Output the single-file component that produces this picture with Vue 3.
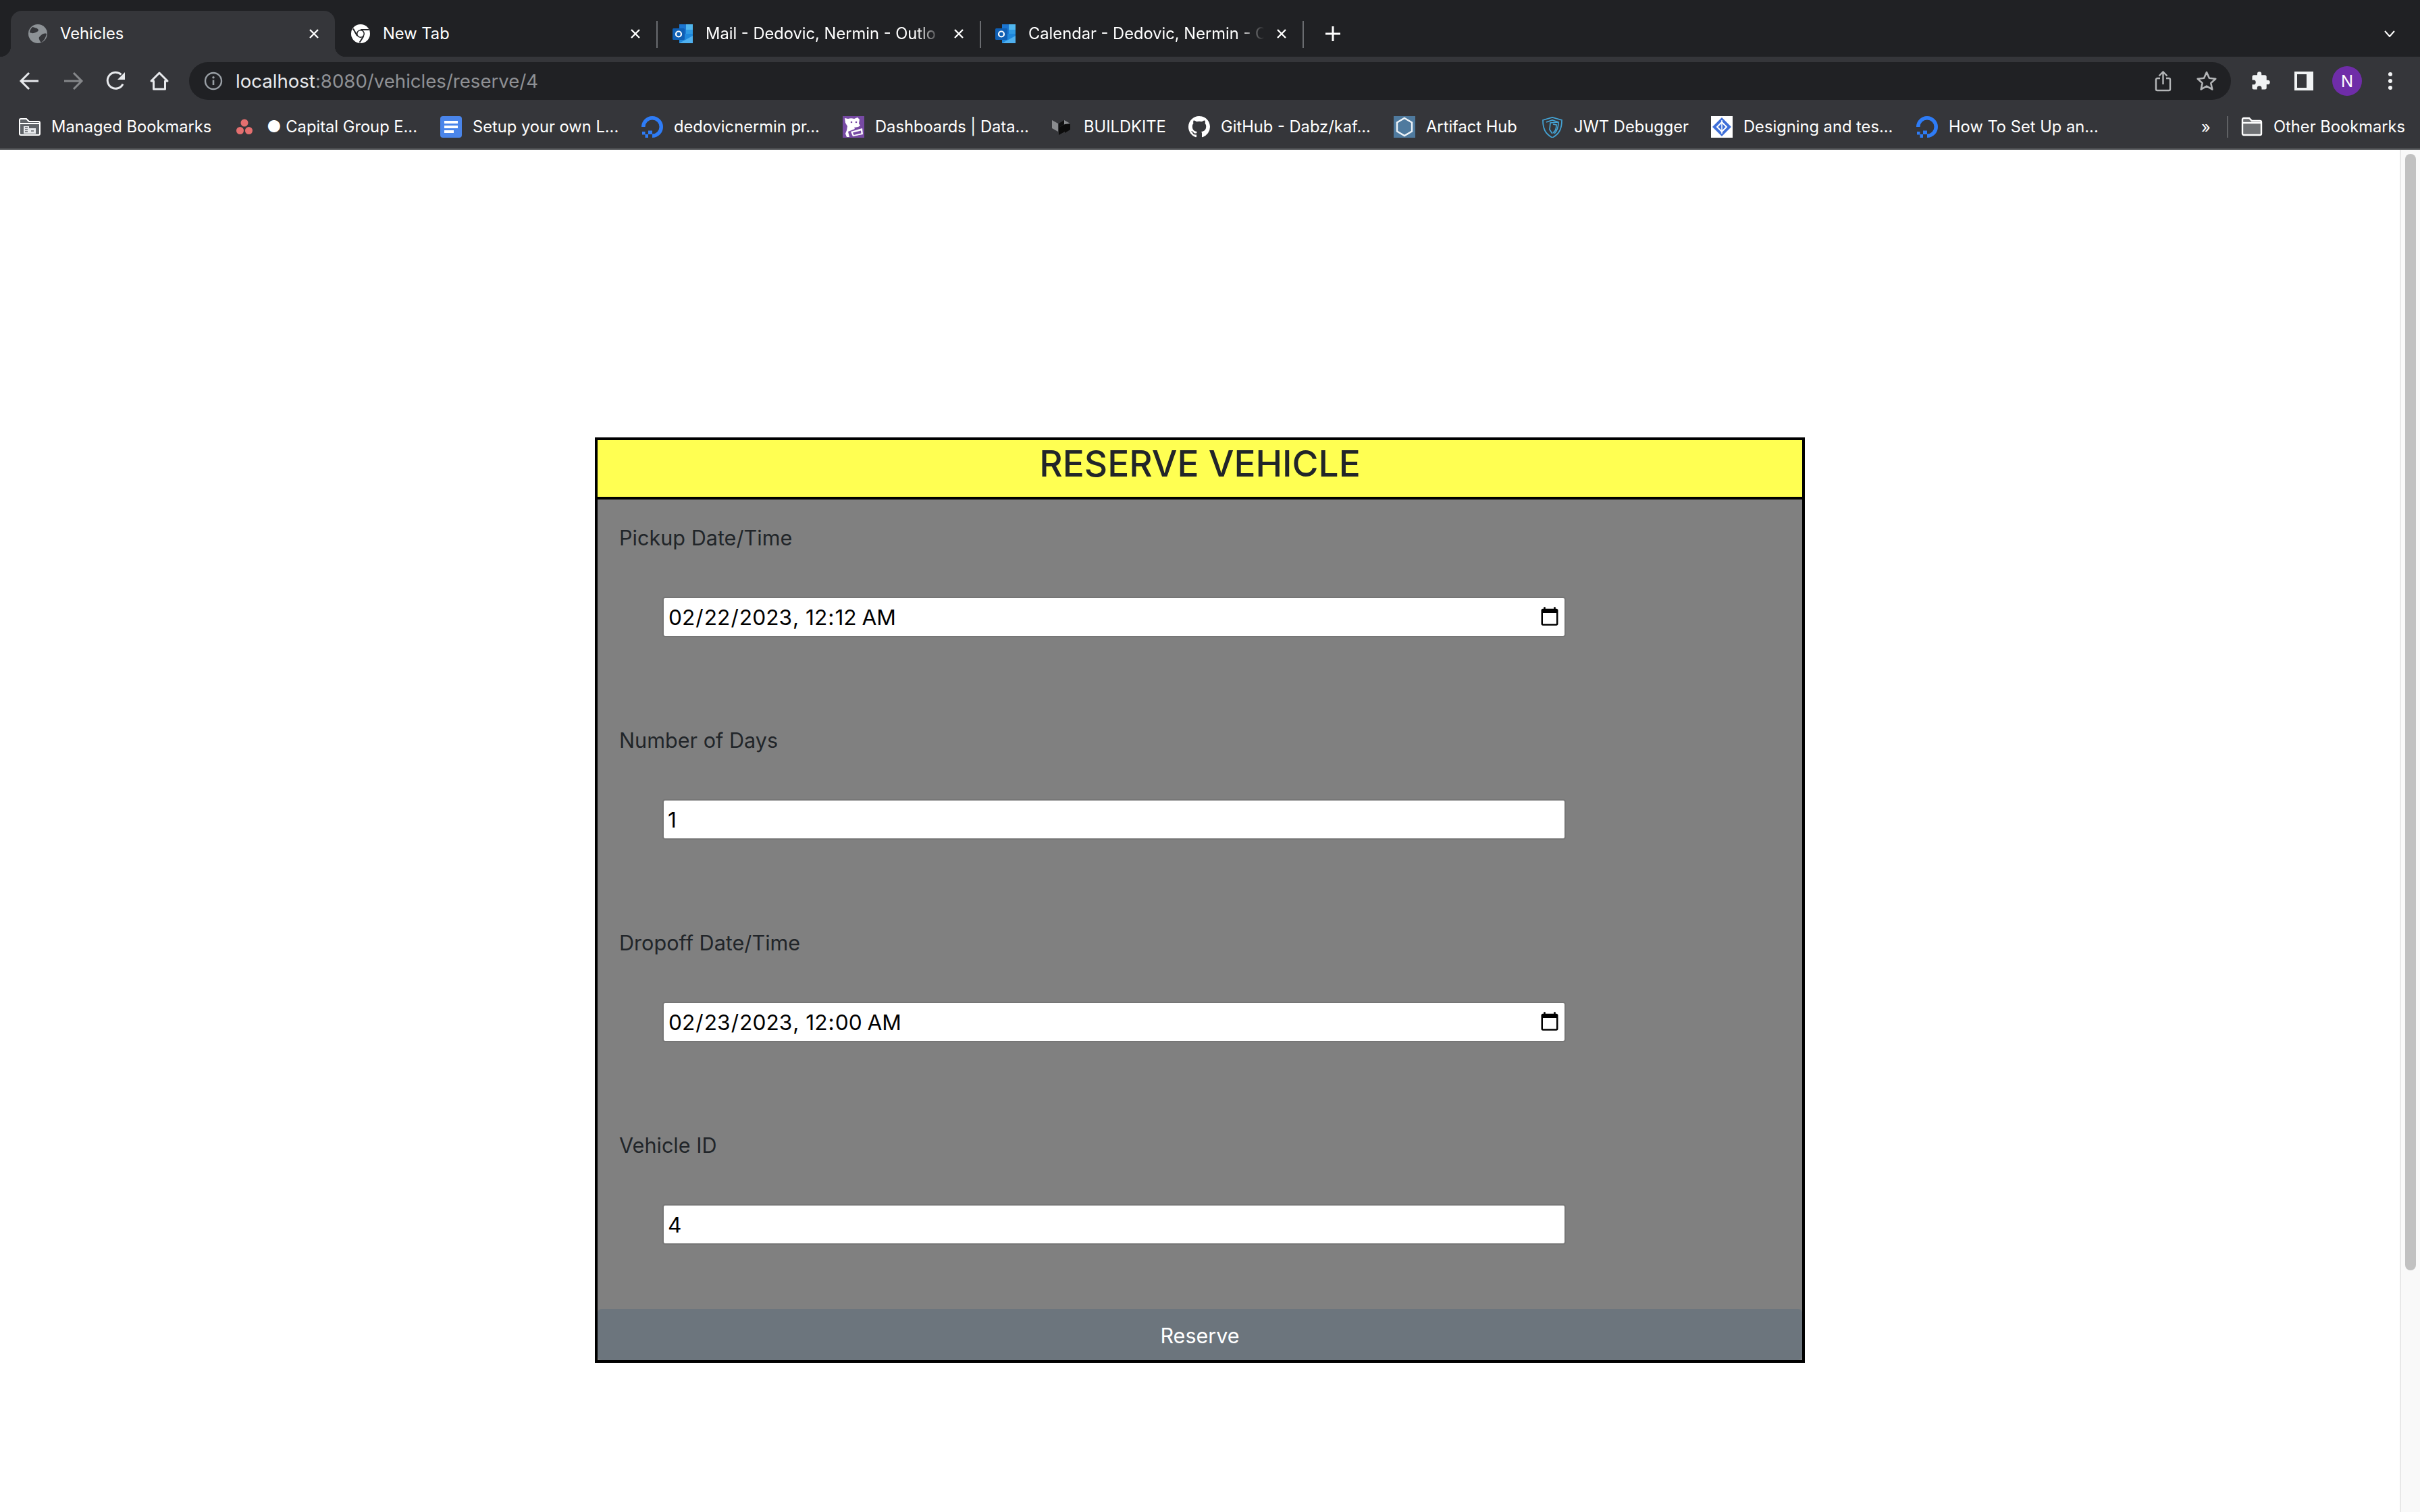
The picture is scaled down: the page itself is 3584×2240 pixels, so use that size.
<script setup>
const tabs = [
  { title: 'Vehicles', icon: 'globe', width: 480, pad: 26, active: true },
  { title: 'New Tab', icon: 'chrome', width: 476, pad: 24 },
  { title: 'Mail - Dedovic, Nermin - Outlo', icon: 'outlook', width: 479, pad: 24, sep: true, fade: true },
  { title: 'Calendar - Dedovic, Nermin - C', icon: 'outlook', width: 478, pad: 23, sep: true, fade: true }
]
const bookmarks = [
  { title: 'Managed Bookmarks', icon: 'managed', width: 322 },
  { title: '● Capital Group E...', icon: 'asana', width: 302 },
  { title: 'Setup your own L...', icon: 'docs', width: 298 },
  { title: 'dedovicnermin pr...', icon: 'ocean', width: 298 },
  { title: 'Dashboards | Data...', icon: 'datadog', width: 310 },
  { title: 'BUILDKITE', icon: 'buildkite', width: 202 },
  { title: 'GitHub - Dabz/kaf...', icon: 'github', width: 304 },
  { title: 'Artifact Hub', icon: 'hub', width: 219 },
  { title: 'JWT Debugger', icon: 'jwt', width: 251 },
  { title: 'Designing and tes...', icon: 'design', width: 304 },
  { title: 'How To Set Up an...', icon: 'ocean', width: 0 }
]
const fields = [
  { label: 'Pickup Date/Time', type: 'datetime-local', value: '2023-02-22T00:12' },
  { label: 'Number of Days', type: 'number', value: '1' },
  { label: 'Dropoff Date/Time', type: 'datetime-local', value: '2023-02-23T00:00' },
  { label: 'Vehicle ID', type: 'number', value: '4' }
]
</script>

<template>
  <div class="window">
    <header class="chrome">
      <div class="tabstrip">
        <div
          v-for="tab in tabs"
          :key="tab.title"
          class="tab"
          :class="{ active: tab.active, sep: tab.sep }"
          :style="{ width: tab.width + 'px', paddingLeft: tab.pad + 'px' }"
        >
          <svg v-if="tab.icon === 'globe'" class="fav" viewBox="0 0 28 28">
            <circle cx="14" cy="14" r="14" fill="#8d9296" />
            <path d="M6 4c3 1 6 1 8 3s0 4-3 5-5 2-9 0c0-3 2-6 4-8zM27 14c-3-1-6 0-8 2s-4 3-3 6 2 4 3 5c4-2 7-8 8-13z" fill="#35363a" />
          </svg>
          <svg v-else-if="tab.icon === 'chrome'" class="fav" viewBox="0 0 28 28">
            <circle cx="14" cy="14" r="14" fill="#fff" />
            <path d="M14 8h12.500M9 17 3 6.500M18.500 17.500 12.500 27" stroke="#202124" stroke-width="2" fill="none" />
            <circle cx="14" cy="14" r="6" fill="#202124" />
            <circle cx="14" cy="14" r="4.500" fill="#fff" />
          </svg>
          <svg v-else class="fav wide" viewBox="0 0 32 28">
            <path d="M10 0h20v26H10z" fill="#1b75d0" />
            <path d="M20 0h10v8H20z" fill="#50b6ee" />
            <path d="M20 8h10v8H20z" fill="#2f9ae4" />
            <path d="M10 14h20v14H10z" fill="#1e87dc" />
            <path d="M10 28l20-11v11z" fill="#4fb0ef" />
            <rect x="0" y="6" width="18" height="17" rx="1.500" fill="#0f5fb4" />
            <circle cx="9" cy="14.500" r="4" fill="none" stroke="#fff" stroke-width="2.200" />
          </svg>
          <span class="tab-title" :class="{ fade: tab.fade }">{{ tab.title }}</span>
          <svg class="close" viewBox="0 0 16 16"><path d="M2 2l12 12M14 2 2 14" stroke="#fff" stroke-width="2.400" /></svg>
        </div>
        <div class="newtab">
          <svg viewBox="0 0 24 24"><path d="M12 1v22M1 12h22" stroke="#fff" stroke-width="3" /></svg>
        </div>
        <div class="tabsearch">
          <svg viewBox="0 0 16 10"><path d="M1 1l7 8 7-8" fill="none" stroke="#fff" stroke-width="2" /></svg>
        </div>
      </div>

      <div class="toolbar">
        <div class="cell">
          <svg class="nav" viewBox="0 0 32 32"><path d="M29 16H3M15 4 3 16l12 12" fill="none" stroke="#e8eaed" stroke-width="3" /></svg>
        </div>
        <div class="cell">
          <svg class="nav" viewBox="0 0 32 32"><path d="M3 16h26M17 4l12 12-12 12" fill="none" stroke="#85878a" stroke-width="3" /></svg>
        </div>
        <div class="cell">
          <svg class="nav" viewBox="0 0 32 32"><path d="M26 20.500A12 12 0 1 1 23.500 6.500" fill="none" stroke="#e8eaed" stroke-width="3" /><path d="M29 3v11H18z" fill="#e8eaed" /></svg>
        </div>
        <div class="cell">
          <svg class="nav" viewBox="0 0 32 32"><path d="M16 4 4 16h3.500v12h17V16H28z" fill="none" stroke="#e8eaed" stroke-width="3" stroke-linejoin="round" /></svg>
        </div>
        <div class="omnibox">
          <svg class="info" viewBox="0 0 28 28"><circle cx="14" cy="14" r="12" fill="none" stroke="#9aa0a6" stroke-width="2.400" /><path d="M14 12.500V20" stroke="#9aa0a6" stroke-width="2.600" /><circle cx="14" cy="8.800" r="1.700" fill="#9aa0a6" /></svg>
          <span class="url"><span class="host">localhost</span>:8080/vehicles/reserve/4</span>
          <div class="omni-actions">
            <div class="cell">
              <svg class="omni-ico" viewBox="0 0 32 32"><path d="M11 12H7a2 2 0 0 0-2 2v14a2 2 0 0 0 2 2h17a2 2 0 0 0 2-2V14a2 2 0 0 0-2-2h-4" fill="none" stroke="#b4b6b8" stroke-width="2.400" /><path d="M15.500 21V3M9.500 8.500l6-6 6 6" fill="none" stroke="#b4b6b8" stroke-width="2.400" /></svg>
            </div>
            <div class="cell">
              <svg class="omni-ico" viewBox="0 0 32 32"><path d="M16 3l3.900 8.700 9.400 1-7 6.400 2 9.300-8.300-4.800-8.300 4.800 2-9.300-7-6.400 9.400-1z" fill="none" stroke="#b4b6b8" stroke-width="2.600" stroke-linejoin="round" /></svg>
            </div>
          </div>
        </div>
        <div class="extras">
          <div class="cell">
            <svg class="puzzle" viewBox="0 0 24 24"><path d="M20.500 11H19V7a2 2 0 0 0-2-2h-4V3.500a2.500 2.500 0 0 0-5 0V5H4a2 2 0 0 0-2 2v3.800h1.500a2.700 2.700 0 0 1 0 5.400H2V20a2 2 0 0 0 2 2h3.800v-1.500a2.700 2.700 0 0 1 5.400 0V22H17a2 2 0 0 0 2-2v-4h1.500a2.500 2.500 0 0 0 0-5z" fill="#f1f3f4" /></svg>
          </div>
          <div class="cell"><div class="sidepanel"></div></div>
          <div class="cell"><div class="avatar">N</div></div>
          <div class="cell"><div class="dots"><i></i><i></i><i></i></div></div>
        </div>
      </div>

      <div class="bookmarks">
        <div
          v-for="(b, i) in bookmarks"
          :key="i"
          class="bookmark"
          :style="b.width ? { width: b.width + 'px' } : null"
        >
          <svg v-if="b.icon === 'managed'" class="bm-ico" viewBox="0 0 32 26">
            <path d="M1 3a2 2 0 0 1 2-2h8l4 4h14a2 2 0 0 1 2 2v16a2 2 0 0 1-2 2H3a2 2 0 0 1-2-2z" fill="#5f6368" stroke="#fff" stroke-width="2" />
            <path d="M1 8h30" stroke="#fff" stroke-width="2" />
            <path d="M7 23V12h8v3h10v8z" fill="#e8eaed" />
            <path d="M9 14h4M9 17h4M9 20h4M18 19h4" stroke="#5f6368" stroke-width="1.500" />
          </svg>
          <svg v-else-if="b.icon === 'asana'" class="bm-ico tight" viewBox="0 0 32 32">
            <circle cx="12" cy="10" r="5.500" fill="#e46f6f" />
            <circle cx="5.500" cy="21.500" r="5.500" fill="#e46f6f" />
            <circle cx="18.500" cy="21.500" r="5.500" fill="#e46f6f" />
          </svg>
          <svg v-else-if="b.icon === 'docs'" class="bm-ico" viewBox="0 0 32 32">
            <rect width="32" height="32" rx="4" fill="#4a85ea" />
            <path d="M6 7h20v4H6zM6 14h20v4H6zM6 21h14v4H6z" fill="#fff" />
          </svg>
          <svg v-else-if="b.icon === 'ocean'" class="bm-ico" viewBox="0 0 32 32">
            <path d="M16 32v-5.500A10.500 10.500 0 1 0 5.500 16H0A16 16 0 1 1 16 32z" fill="#2e7cf6" />
            <path d="M10 21.500h6V27h-6zM5.500 27H10v5H5.500zM1 23h4.500v4.500H1z" fill="#2e7cf6" />
          </svg>
          <svg v-else-if="b.icon === 'datadog'" class="bm-ico" viewBox="0 0 32 32">
            <rect width="32" height="32" fill="#774aa4" />
            <path d="M3 3l5 1c3-1 6-1 9 0l5-2 3 3-1 6 2 3-3 2-6 1 1 2-10 4 1 4 1 4H6l-2-5 2-5 1-6-3-5z" fill="#fff" />
            <path d="M12 23l17-5 1 9-15 3z" fill="#fff" />
            <path d="M15 24.500l12-3 .5 4-11 2.500z" fill="#774aa4" />
            <circle cx="13" cy="9" r="1.300" fill="#774aa4" /><circle cx="20" cy="9" r="1.300" fill="#774aa4" />
          </svg>
          <svg v-else-if="b.icon === 'buildkite'" class="bm-ico bk" viewBox="0 0 28 24">
            <path d="M0 2l9 5v12l-9-5z" fill="#8a8c8f" />
            <path d="M10 7l8-5v6l-8 5z" fill="#111" />
            <path d="M18 2l9 5-9 5z" fill="#8a8c8f" />
            <path d="M10 13l9-5v11l-9 5z" fill="#0c0c0c" />
            <path d="M19 8l8-1v9l-8 5z" fill="#0c0c0c" />
          </svg>
          <svg v-else-if="b.icon === 'github'" class="bm-ico" viewBox="0 0 16 16">
            <path fill="#fff" d="M8 0C3.580 0 0 3.580 0 8c0 3.540 2.290 6.530 5.470 7.590.4.070.55-.17.55-.38 0-.19-.01-.82-.01-1.490-2.010.37-2.530-.49-2.690-.94-.09-.23-.48-.94-.82-1.130-.28-.15-.68-.52-.01-.53.630-.01 1.080.58 1.230.82.720 1.210 1.870.87 2.330.66.070-.52.280-.87.510-1.070-1.780-.2-3.640-.89-3.640-3.950 0-.87.310-1.590.820-2.150-.08-.2-.36-1.020.08-2.120 0 0 .67-.21 2.200.82.640-.18 1.320-.27 2-.27s1.360.09 2 .27c1.530-1.040 2.200-.82 2.200-.82.440 1.100.160 1.920.080 2.120.510.560.820 1.270.820 2.150 0 3.070-1.870 3.750-3.650 3.950.29.250.54.730.54 1.480 0 1.070-.01 1.930-.01 2.200 0 .210.150.460.550.380A8.010 8.010 0 0 0 16 8c0-4.420-3.580-8-8-8z" />
          </svg>
          <svg v-else-if="b.icon === 'hub'" class="bm-ico" viewBox="0 0 32 32">
            <rect width="32" height="32" fill="#4f7a9e" />
            <path d="M16 3l11 6.500v13L16 29 5 22.500v-13z" fill="none" stroke="#eef3f7" stroke-width="2.400" />
          </svg>
          <svg v-else-if="b.icon === 'jwt'" class="bm-ico" viewBox="0 0 32 32" fill="none" stroke="#44a4d6" stroke-width="1.700">
            <path d="M2 6l14-4 14 4c0 12-3 20-14 26C5 26 2 18 2 6z" />
            <path d="M7 9l9-3 9 3c0 8-2 13-6 17" />
            <path d="M25 9l-12 1-1 10 4 6" />
            <path d="M17 12l5 1c0 5-1 9-5 12" />
          </svg>
          <svg v-else-if="b.icon === 'design'" class="bm-ico" viewBox="0 0 32 32">
            <rect width="32" height="32" fill="#fff" />
            <path d="M16 2l14 14-14 14L2 16z" fill="#3f6fd8" />
            <path d="M16 9l7 7-7 7-7-7z" fill="none" stroke="#fff" stroke-width="2" />
            <path d="M16 6v20" stroke="#fff" stroke-width="1.500" />
          </svg>
          <span class="bm-text">{{ b.title }}</span>
        </div>
        <div class="more">»</div>
        <div class="other">
          <svg class="bm-ico" viewBox="0 0 32 32">
            <path d="M2 5a2 2 0 0 1 2-2h8l4 4h12a2 2 0 0 1 2 2v17a2 2 0 0 1-2 2H4a2 2 0 0 1-2-2z" fill="#6f7174" stroke="#fff" stroke-width="2.400" />
            <path d="M2 10h28" stroke="#fff" stroke-width="2.400" />
          </svg>
          <span class="bm-text">Other Bookmarks</span>
        </div>
      </div>
    </header>

    <div class="viewport">
      <main class="page">
        <form class="card" @submit.prevent>
          <h2 class="card-title">RESERVE VEHICLE</h2>
          <div class="card-body">
            <div v-for="f in fields" :key="f.label" class="group">
              <label class="label">{{ f.label }}</label>
              <input class="input" :type="f.type" :value="f.value" />
            </div>
          </div>
          <button class="reserve" type="submit">Reserve</button>
        </form>
      </main>
      <aside class="scrollbar"><div class="thumb"></div></aside>
    </div>
  </div>
</template>

<style>
html, body { margin: 0; background: #fff; }
</style>

<style scoped>
* { box-sizing: border-box; }
.window {
  width: 3584px;
  height: 2240px;
  display: flex;
  flex-direction: column;
  overflow: hidden;
  font-family: Inter, "Liberation Sans", sans-serif;
  color: #212529;
  background: #fff;
}
.chrome { flex: none; background: #35363a; border-bottom: 2px solid #5f6164; }
.tabstrip {
  height: 84px;
  display: flex;
  align-items: flex-end;
  padding-left: 16px;
  background: #202124;
}
.tab {
  position: relative;
  height: 68px;
  flex: none;
  display: flex;
  align-items: center;
  padding-right: 23px;
  color: #fff;
  font-size: 23.7px;
  border-radius: 16px 16px 0 0;
}
.tab.active { background: #35363a; }
.tab.active::before,
.tab.active::after {
  content: "";
  position: absolute;
  bottom: 0;
  width: 16px;
  height: 16px;
}
.tab.active::before { left: -16px; background: radial-gradient(circle at 0 0, #202124 16px, #35363a 16.5px); }
.tab.active::after { right: -16px; background: radial-gradient(circle at 100% 0, #202124 16px, #35363a 16.5px); }
.tab.sep::after {
  content: "";
  position: absolute;
  left: 0;
  top: 15px;
  width: 2px;
  height: 40px;
  background: #6a6c70;
}
.tab:nth-child(4)::before {
  content: "";
  position: absolute;
  right: -2px;
  top: 15px;
  width: 2px;
  height: 40px;
  background: #6a6c70;
}
.fav { width: 28px; height: 28px; flex: none; margin-right: 19px; }
.fav.wide { width: 32px; margin-right: 17px; }
.tab-title { flex: 1; min-width: 0; white-space: nowrap; line-height: 36px; }
.tab-title.fade { -webkit-mask-image: linear-gradient(to left, transparent 0, #000 36px); mask-image: linear-gradient(to left, transparent 0, #000 36px); }
.close { width: 16px; height: 16px; flex: none; margin-left: 18px; }
.newtab { width: 40px; height: 68px; margin-left: 25px; display: flex; align-items: center; justify-content: center; flex: none; }
.newtab svg { width: 24px; height: 24px; }
.tabsearch { margin-left: auto; width: 40px; height: 68px; margin-right: 25px; display: flex; align-items: center; justify-content: center; }
.tabsearch svg { width: 16px; height: 10px; }

.toolbar { height: 64px; display: flex; align-items: flex-start; padding-left: 12px; padding-top: 8px; }
.cell { width: 64px; height: 56px; flex: none; display: flex; align-items: center; justify-content: center; }
.nav { width: 32px; height: 32px; display: block; }
.omnibox {
  flex: 1;
  height: 56px;
  margin-left: 12px;
  border-radius: 28px;
  background: #202124;
  display: flex;
  align-items: center;
  padding-left: 22px;
  padding-right: 4px;
}
.info { width: 28px; height: 28px; flex: none; margin-right: 19px; }
.url { font-size: 27.6px; color: #8f9195; white-space: nowrap; }
.host { color: #e8eaed; }
.omni-actions { margin-left: auto; display: flex; }
.omni-ico { width: 32px; height: 32px; }
.extras { display: flex; margin-left: 12px; padding-right: 12px; }
.puzzle { width: 30px; height: 30px; }
.sidepanel { width: 28px; height: 28px; border: solid #f1f3f4; border-width: 4px 10px 4px 4px; background: #35363a; }
.avatar { width: 44px; height: 44px; border-radius: 50%; background: #6f2da8; color: #fff; font-size: 24px; display: flex; align-items: center; justify-content: center; }
.dots { display: flex; flex-direction: column; gap: 4px; }
.dots i { display: block; width: 6px; height: 6px; border-radius: 50%; background: #f1f3f4; }

.bookmarks { height: 72px; display: flex; align-items: center; padding: 8px 0 0 28px; color: #fff; font-size: 23.7px; }
.bookmark { display: flex; align-items: center; flex: none; white-space: nowrap; }
.bm-ico { width: 32px; height: 32px; flex: none; margin-right: 16px; }
.bm-ico.tight { width: 32px; margin-right: 13px; }
.bk { width: 28px; height: 24px; margin-right: 19px; }
.bm-text { line-height: 32px; }
.more { margin-left: auto; width: 36px; }
.other { display: flex; align-items: center; border-left: 2px solid #5f6164; height: 32px; padding-left: 19px; padding-right: 22px; margin-left: 2px; }

.viewport { flex: 1; display: flex; min-height: 0; }
.page { flex: 1; min-width: 0; display: flex; justify-content: center; padding-top: 426px; }
.card {
  width: 1792px;
  height: 1371px;
  border: 4px solid #000;
  background: #808080;
  display: flex;
  flex-direction: column;
}
.card-title {
  margin: 0;
  height: 88px;
  padding-bottom: 14px;
  flex: none;
  background: #ffff52;
  border-bottom: 4px solid #000;
  text-align: center;
  font-size: 53.2px;
  line-height: 70px;
  font-weight: 500;
  color: #212529;
}
.card-body { flex: 1; padding: 33px 33px 0 32px; min-height: 0; }
.group { height: 300px; display: flex; flex-direction: column; }
.group:last-child { height: 267px; }
.label { font-size: 30.6px; line-height: 48px; color: #212529; margin-bottom: 63px; }
.input {
  display: block;
  width: 1338px;
  height: 60px;
  margin-left: 64px;
  padding: 0 4px 0 6px;
  border: 2px solid #767676;
  border-radius: 4px;
  background: #fff;
  color: #000;
  font-family: Inter, "Liberation Sans", sans-serif;
  font-size: 31.7px;
  outline: none;
}
.reserve {
  flex: none;
  height: 76px;
  padding: 2px 0 0;
  border: 0;
  border-radius: 6px;
  background: #6c757d;
  color: #fff;
  font-family: inherit;
  font-size: 30.5px;
}
.scrollbar { width: 30px; flex: none; background: #f9f9f9; border-left: 2px solid #e8e8e8; padding: 6px 6px 0; }
.thumb { width: 16px; height: 1654px; border-radius: 8px; background: #c1c1c1; }
</style>
